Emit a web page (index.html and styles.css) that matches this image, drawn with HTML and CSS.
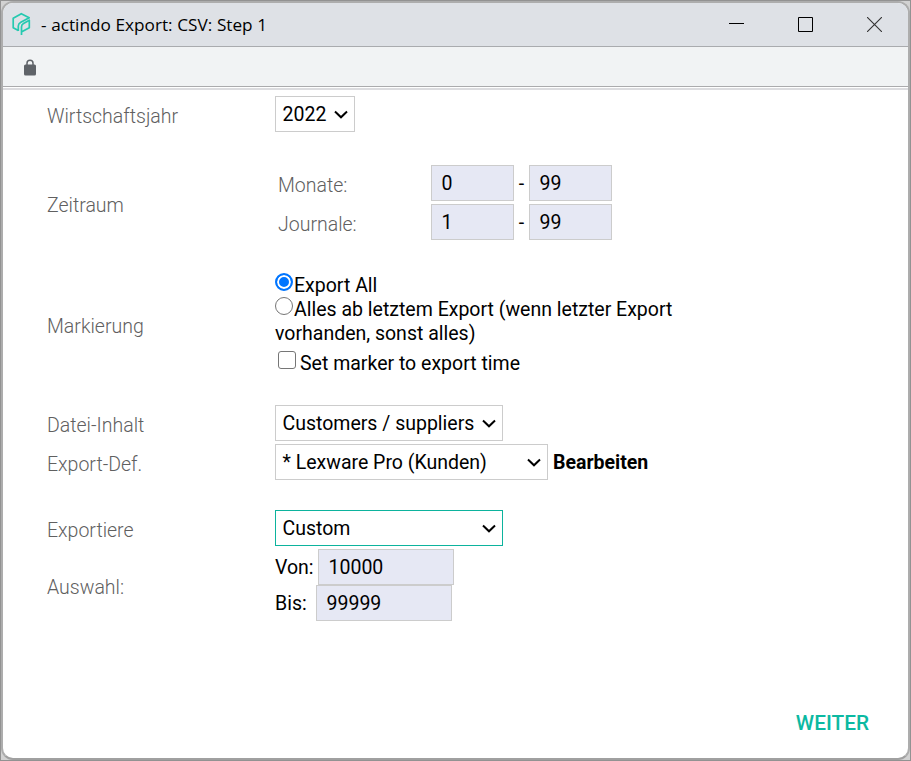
FILE: index.html
```html
<!DOCTYPE html>
<html lang="de">
<head>
<meta charset="utf-8">
<title>actindo Export: CSV: Step 1</title>
<link rel="stylesheet" href="styles.css">
</head>
<body>
<div class="window">
  <header class="titlebar">
    <svg class="logo" width="20" height="24" viewBox="0 0 20 24" fill="none" stroke="#25c9b0" stroke-width="1.7" stroke-linejoin="round">
      <path d="M6.300 18.600 1.200 15.800V6.300L9.300 1.700 17.200 5.800 8.800 10.300Q6.300 11.800 6.300 14V19"/>
      <path d="M9.500 23V15Q9.500 12.600 11.500 11.500L17.300 8.200V15.800L9.800 19.800"/>
    </svg>
    <span class="title">- actindo Export: CSV: Step 1</span>
    <div class="controls">
      <svg width="15" height="15" viewBox="0 0 15 15" stroke="#000"><path d="M0 6.500H15"/></svg>
      <svg width="15" height="15" viewBox="0 0 15 15" fill="none" stroke="#000"><path d="M.5.5h14v14H.5z"/></svg>
      <svg width="15" height="15" viewBox="0 0 15 15" stroke="#333" stroke-width="1.1"><path d="M0 0 15 15M15 0 0 15"/></svg>
    </div>
  </header>
  <div class="addressbar">
    <svg width="12" height="17" viewBox="0 0 12 17"><path d="M3 7V4.200a3 3 0 0 1 6 0V7" fill="none" stroke="#5f6368" stroke-width="1.500"/><rect y="5.500" width="12" height="11" rx="1.500" fill="#5f6368"/></svg>
  </div>
  <main class="form">
    <div class="row">
      <div class="label">Wirtschaftsjahr</div>
      <div class="select year">2022<svg class="chev" viewBox="0 0 14 9"><path d="M1 1.500 7 7.300 13 1.500"/></svg></div>
    </div>
    <div class="row period">
      <div class="label">Zeitraum</div>
      <div class="ranges">
        <div class="label">Monate:</div><div class="field short">0</div><span class="dash">-</span><div class="field short">99</div>
        <div class="label">Journale:</div><div class="field short">1</div><span class="dash">-</span><div class="field short">99</div>
      </div>
    </div>
    <div class="row marking">
      <div class="label">Markierung</div>
      <div class="options">
        <div><span class="radio checked"></span>Export All</div>
        <div><span class="radio"></span>Alles ab letztem Export (wenn letzter Export vorhanden, sonst alles)</div>
        <div class="marker"><span class="checkbox"></span>Set marker to export time</div>
      </div>
    </div>
    <div class="row content-type">
      <div class="label">Datei-Inhalt</div>
      <div class="select medium">Customers / suppliers<svg class="chev" viewBox="0 0 14 9"><path d="M1 1.500 7 7.300 13 1.500"/></svg></div>
    </div>
    <div class="row definition">
      <div class="label">Export-Def.</div>
      <div class="select wide">* Lexware Pro (Kunden)<svg class="chev" viewBox="0 0 14 9"><path d="M1 1.500 7 7.300 13 1.500"/></svg></div>
      <b class="edit">Bearbeiten</b>
    </div>
    <div class="row export">
      <div class="label">Exportiere</div>
      <div class="select medium active">Custom<svg class="chev" viewBox="0 0 14 9"><path d="M1 1.500 7 7.300 13 1.500"/></svg></div>
    </div>
    <div class="row selection">
      <div class="label">Auswahl:</div>
      <div>
        <div class="bound"><span class="from">Von:</span><div class="field long">10000</div></div>
        <div class="bound"><span class="to">Bis:</span><div class="field long">99999</div></div>
      </div>
    </div>
    <div class="next">WEITER</div>
  </main>
</div>
</body>
</html>
```
FILE: styles.css
```css
* { box-sizing: border-box; }
body {
  margin: 0;
  height: 761px;
  border: 1px solid #929292;
  background: #d2d2d2;
  font: 19.5px/24px Roboto, sans-serif;
  color: #000;
  overflow: hidden;
}
.window {
  height: 759px;
  width: 909px;
  border: 2px solid #adadad;
  border-bottom-color: #a0a0a0;
  border-radius: 12px;
  background: #fff;
  overflow: hidden;
}
.titlebar {
  display: flex;
  align-items: center;
  height: 44px;
  padding: 0 26px 0 9px;
  background: #dee1e6;
  border-bottom: 1px solid #a9abae;
}
.logo { margin-top: -1px; }
.title {
  margin-left: 9px;
  margin-top: 1px;
  font: 17.2px/24px "Open Sans", sans-serif;
  word-spacing: .2px;
  white-space: nowrap;
}
.controls { display: flex; gap: 54px; margin-left: auto; }
.addressbar {
  height: 43px;
  padding: 12px 0 0 21px;
  background: #f1f3f4;
  border-bottom: 2px solid #dcdcdf;
  box-shadow: inset 0 -1px #fff, inset 0 -2px #ababad;
}
.addressbar svg { display: block; }
.form { padding: 6px 0 0 44px; }
.row { display: grid; grid-template-columns: 228px auto auto; justify-content: start; align-items: center; }
.label { font-weight: 300; color: #606060; padding-top: 6px; }
.select, .field {
  height: 36px;
  border: 1px solid #ccc;
  line-height: 36px;
}
.select {
  display: flex;
  align-items: flex-start;
  justify-content: space-between;
  padding: 0 6px 0 6.500px;
  white-space: nowrap;
}
.chev { width: 14px; height: 9px; margin-top: 13px; fill: none; stroke: #000; stroke-width: 2; }
.year { width: 80px; }
.medium { width: 228px; }
.wide { width: 273px; }
.active { border-color: #0cb39d; }
.field { background: #e6e8f4; padding-left: 9.500px; }
.short { width: 83px; }
.long { width: 136px; }
.period { margin-top: 33px; }
.ranges { display: grid; grid-template-columns: 153px 83px 15px 83px; row-gap: 3px; align-items: center; padding-left: 3px; }
.dash { text-align: center; line-height: 34px; padding-top: 2px; }
.marking { margin-top: 34px; }
.marking > .label { padding-top: 4px; }
.options { width: 420px; }
.radio {
  display: inline-block;
  width: 18px;
  height: 18px;
  border: 1.500px solid #767676;
  border-radius: 50%;
  margin: -1px 1px 0 0;
  position: relative;
  top: -1px;
}
.checked { border: 2px solid #0075ff; background: #0075ff; box-shadow: inset 0 0 0 2px #fff; }
.checkbox {
  display: inline-block;
  width: 18px;
  height: 18px;
  border: 1px solid #767676;
  border-radius: 3px;
  margin: 0 4px 0 3px;
  position: relative;
  top: -1px;
}
.marker { margin-top: 6px; }
.content-type { margin-top: 29px; }
.definition { margin-top: 3px; }
.edit { margin-left: 5px; padding-top: 2px; }
.export { margin-top: 30px; }
.selection { margin-top: 3px; }
.bound { display: flex; line-height: 38px; height: 36px; }
.from { width: 43px; }
.to { width: 41px; }
.next { margin: 90px 39px 0 0; text-align: right; font-size: 20.800px; font-weight: 500; color: #0cb9a2; }
```
